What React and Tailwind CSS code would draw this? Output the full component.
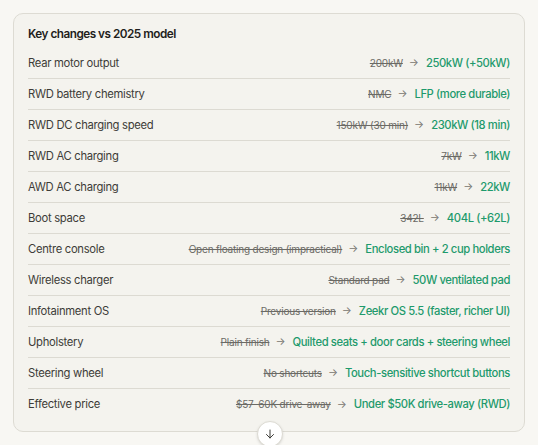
import React from "react";

const rows = [
  ["Rear motor output", "200kW", "250kW (+50kW)"],
  ["RWD battery chemistry", "NMC", "LFP (more durable)"],
  ["RWD DC charging speed", "150kW (30 min)", "230kW (18 min)"],
  ["RWD AC charging", "7kW", "11kW"],
  ["AWD AC charging", "11kW", "22kW"],
  ["Boot space", "342L", "404L (+62L)"],
  ["Centre console", "Open floating design (impractical)", "Enclosed bin + 2 cup holders"],
  ["Wireless charger", "Standard pad", "50W ventilated pad"],
  ["Infotainment OS", "Previous version", "Zeekr OS 5.5 (faster, richer UI)"],
  ["Upholstery", "Plain finish", "Quilted seats + door cards + steering wheel"],
  ["Steering wheel", "No shortcuts", "Touch-sensitive shortcut buttons"],
  ["Effective price", "$57–60K drive-away", "Under $50K drive-away (RWD)"],
];

export default function App() {
  return (
    <div
      className="relative w-[538px] h-[445px] overflow-hidden bg-[#f8f7f3] pt-[13px] px-[13px]"
      style={{ fontFamily: "Inter, 'Noto Sans', sans-serif" }}
    >
      <div className="relative rounded-[10px] border border-[#dddbd3] bg-[#f4f3ee] px-[14px] pt-[11px] pb-[11px]">
        <div className="h-[20px] mb-[3px] flex items-center text-[11.75px] font-semibold text-[#1f1e1c] tracking-[-0.5px]">
          Key changes vs 2025 model
        </div>
        {rows.map(([label, oldV, newV], i) => (
          <div
            key={label}
            className={`h-[31px] flex items-center justify-between ${i < rows.length - 1 ? "border-b border-[#dcdad2]" : ""}`}
          >
            <span className="text-[11.25px] text-[#3d3c38] tracking-[-0.3px]">{label}</span>
            <span className="flex items-center">
              <span className="text-[10px] text-[#6b6a65] line-through tracking-[-0.2px]">{oldV}</span>
              <span className="text-[10.5px] text-[#77756f] ml-[6px] mr-[7px]">→</span>
              <span className="text-[11.25px] font-medium text-[#1e9a6c] tracking-[-0.4px]">{newV}</span>
            </span>
          </div>
        ))}
      </div>
      <div className="absolute left-[257px] top-[421px] w-[26px] h-[26px] rounded-full bg-white border border-[#dddbd3] flex items-center justify-center shadow-sm">
        <svg width="12" height="12" viewBox="0 0 24 24" fill="none" stroke="#3d3c38" strokeWidth="2" strokeLinecap="round" strokeLinejoin="round">
          <path d="M12 4v16" />
          <path d="M5 13l7 7 7-7" />
        </svg>
      </div>
    </div>
  );
}
